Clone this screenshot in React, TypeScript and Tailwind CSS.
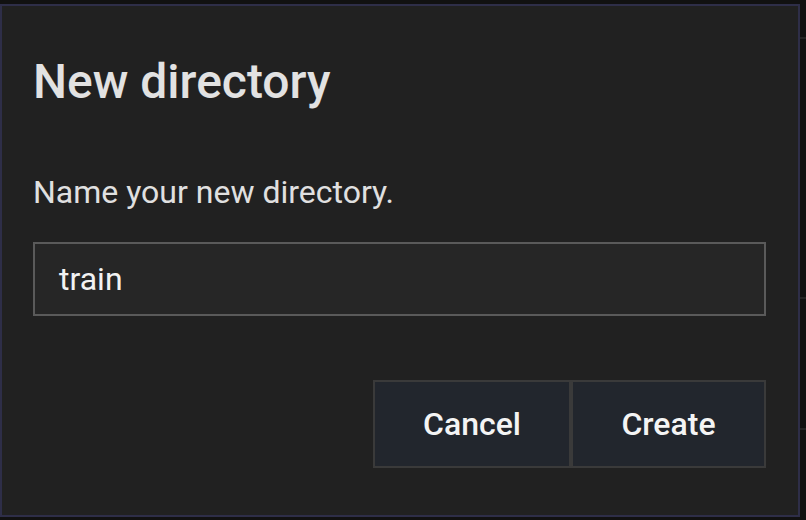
import React from "react";

export default function App() {
  const font = { fontFamily: "Roboto, 'Noto Sans', sans-serif" };
  return (
    <div
      className="w-[806px] h-[520px] bg-[#111111] overflow-hidden flex flex-row items-start"
      style={font}
    >
      <div className="mt-[4px] w-[800px] h-[513px] shrink-0 border-2 border-[#2e2e48] bg-[#212121] pl-[31px] pr-[32px] pt-[52px] flex flex-col">
        <h1 className="text-[48px] leading-[48px] font-medium text-[#e2e2e2]">
          New directory
        </h1>
        <p className="mt-[70px] text-[32px] leading-[32px] text-[#e0e0e0]">
          Name your new directory.
        </p>
        <div className="mt-[34px] h-[74px] border-2 border-[#5a5a5a] bg-[#262626] pl-[24px] flex items-center">
          <span className="text-[32px] leading-[32px] text-[#f2f2f2]">train</span>
        </div>
        <div className="mt-[64px] flex flex-row justify-end">
          <button className="h-[88px] w-[198px] border-2 border-[#3a3a3a] bg-[#22262d] text-[32px] leading-[32px] font-medium text-[#f4f4f4] flex items-center justify-center">
            Cancel
          </button>
          <button className="h-[88px] w-[195px] border-2 border-[#3a3a3a] bg-[#22262d] text-[32px] leading-[32px] font-medium text-[#f4f4f4] flex items-center justify-center">
            Create
          </button>
        </div>
      </div>
      <div className="flex-1 flex flex-col">
        <div className="mt-[37px] h-[2px] bg-[#242424]" />
        <div className="mt-[258px] h-[2px] bg-[#242424]" />
        <div className="mt-[129px] h-[2px] bg-[#242424]" />
      </div>
    </div>
  );
}
